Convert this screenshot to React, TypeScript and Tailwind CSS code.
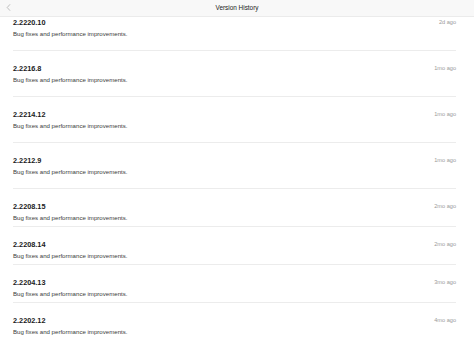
import React from "react";

const items = [
  { v: "2.2220.10", d: "2d ago", tall: true, first: true },
  { v: "2.2216.8", d: "1mo ago", tall: true },
  { v: "2.2214.12", d: "1mo ago", tall: true },
  { v: "2.2212.9", d: "1mo ago", tall: true },
  { v: "2.2208.15", d: "2mo ago", tall: false },
  { v: "2.2208.14", d: "2mo ago", tall: false },
  { v: "2.2204.13", d: "3mo ago", tall: false },
  { v: "2.2202.12", d: "4mo ago", tall: false, last: true },
];

export default function App() {
  return (
    <div
      className="w-[474px] h-[343px] overflow-hidden bg-white flex flex-col"
      style={{ fontFamily: '"Liberation Sans", Arial, sans-serif' }}
    >
      <div className="h-[17px] shrink-0 bg-[#f8f8f8] border-b border-[#ebebeb] flex items-center relative">
        <svg
          className="absolute left-[6px] top-[4px]"
          width="5"
          height="7"
          viewBox="0 0 5 7"
          fill="none"
        >
          <path d="M3.8 0.6 L1.2 3.5 L3.8 6.4" stroke="#b0b0b0" strokeWidth="0.8" strokeLinecap="round" strokeLinejoin="round" />
        </svg>
        <div className="flex-1 text-center text-[6.4px] leading-[16px] text-[#222] font-medium">
          Version History
        </div>
      </div>
      <div className="flex flex-col pl-[13px] pr-[18px]">
        {items.map((it, i) => (
          <div
            key={i}
            className={`flex items-start border-[#ececec] ${it.last ? "" : "border-b"} ${it.first ? "pt-0" : "pt-[12px]"} ${it.tall ? (it.first ? "h-[34px]" : "h-[46px]") : "h-[38px]"}`}
          >
            <div className="flex-1 flex flex-col">
              <div className="text-[7.3px] leading-[12px] font-bold text-[#1a1a1a]">{it.v}</div>
              <div className="text-[6.1px] leading-[10px] text-[#3a3a3a]">
                Bug fixes and performance improvements.
              </div>
            </div>
            <div className="text-[5.6px] leading-[10px] text-[#9a9a9a]">{it.d}</div>
          </div>
        ))}
      </div>
    </div>
  );
}
